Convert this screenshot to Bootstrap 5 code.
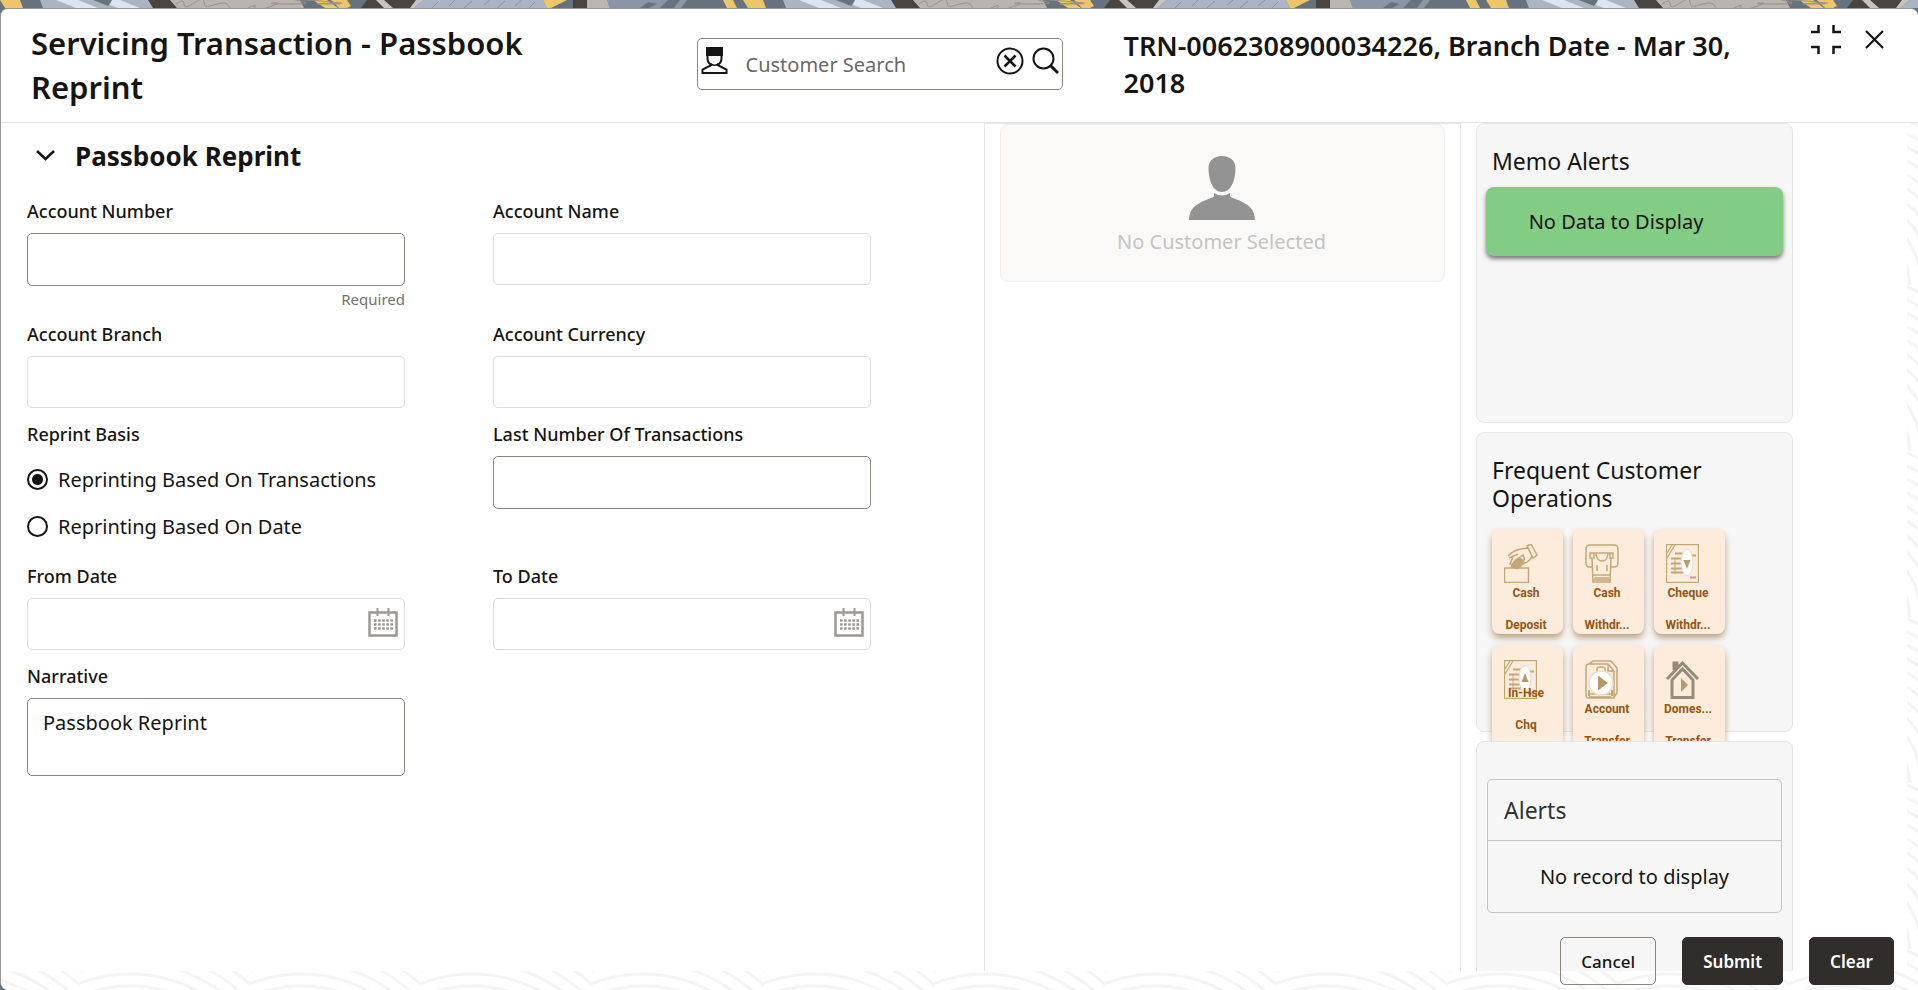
<!DOCTYPE html>
<html lang="en">
<head>
<meta charset="utf-8">
<meta name="viewport" content="width=device-width, initial-scale=1">
<title>Servicing Transaction - Passbook Reprint</title>
<link rel="stylesheet" href="https://cdn.jsdelivr.net/npm/bootstrap@5.3.0/dist/css/bootstrap.min.css">
<style>
body{font-family:"Noto Sans","Open Sans",sans-serif;font-size:20px;line-height:28px;color:#161513;background:#66727d}
.shell{height:100vh;overflow:hidden}
.banner{height:8px;width:100%;flex:none}
.banner-wrap{background:#66727d;margin-bottom:-12px;padding-bottom:12px}
.dialog{border:1px solid #98999a;border-bottom:0;border-right:0;border-radius:8px 8px 0 8px;overflow:hidden;min-height:0;
background:#fff repeating-radial-gradient(circle at 30% 100%,#fff 0 7px,#f4f4f4 8px 10px,#fff 11px 12px) 78px 110px/171px 166px}
.head{height:114px;border-bottom:1px solid #e5e5e5;background:#fff;padding:12px 30px 0 30px}
.head h1{font-size:31px;line-height:44px;font-weight:600;width:calc(36% - 3px);padding-right:150px;margin:0}
.head h2{font-size:27px;line-height:37px;font-weight:600;margin:6px 0 0 61px;width:34%}
.search{width:366px;height:52px;border:1px solid #8b8580;border-radius:5px;margin-top:17px;padding:0 3px}
.search input{background:none;border:0;outline:0;font-size:20px;padding:0;margin-left:18px;min-width:0;width:0;margin-top:2px}
.search input::placeholder{color:#6b6864;opacity:1}
.bare{background:none;border:0;padding:0;color:inherit;line-height:0}
.search .bare,.search>svg{margin-bottom:6px;flex:none}
.main-grid{display:grid;grid-template-columns:983fr 477fr 446fr;background:#fff;margin:0 11px 19px 0;min-height:0;overflow:hidden}
.form-col{padding:15px 113px 0 26px}
.form-col h3{font-size:26px;line-height:36px;font-weight:700;margin:0}
.fields{display:grid;grid-template-columns:1fr 1fr;column-gap:88px;row-gap:14px;margin-top:25px}
.cap{display:block;font-size:18px;line-height:24px;font-weight:500;margin:0 0 10px;float:none;width:auto}
.box{width:100%;height:53px;border:1px solid #8b8580;border-radius:5px;background:#fff;padding:10px 15px;font-size:20px;color:#161513;display:block;box-shadow:none;resize:none}
textarea.box{height:78px}
.box:disabled{height:52px;border-color:#dfdedd;background:#fff}
.note{height:22px;font-size:15px;line-height:27px;color:#74716e;text-align:right}
.date{position:relative}
.date button{position:absolute;right:7px;top:10px;color:#9b9996}
.pick{height:47px;gap:10px}
.pick input{width:21px;height:21px;margin:0;appearance:none;border:2px solid #161513;border-radius:50%;background:#fff}
.pick input:checked{background:radial-gradient(circle,#161513 0 5px,#fff 6px)}
.mid{border:1px solid #e5e5e5;border-bottom:0;padding:0 15px}
.cust{background:#faf9f8;border:1px solid #f0eeec;border-radius:8px;height:158px;padding:31px 2px 0 0;color:#c4c3c1}
.side{padding:0 114px 0 15px}
.panel{background:#f6f6f6;border:1px solid #e5e5e5;border-radius:8px;height:300px;margin-bottom:9px;flex:none}
.panel h4{font-size:23px;line-height:28px;font-weight:400;margin:0}
.panel .title{padding:23px 15px 0}
.memo{background:#83cc83;border-radius:8px;height:69px;margin:12px 9px 0;padding-right:37px;box-shadow:0 3px 4px rgba(0,0,0,.5)}
.ops{display:grid;grid-template-columns:repeat(3,71px);column-gap:10px;row-gap:11px;margin:17px 0 0 15px}
.op{height:105px;background:#fdecdc;border:0;border-radius:8px;box-shadow:0 4px 6px rgba(150,110,60,.6);font:bold 12px/32px Roboto,"Liberation Sans Narrow",sans-serif;color:#9a5411;padding:15px 3px 0 0;display:flex;flex-direction:column;overflow:visible}
.op svg{margin-left:12px;flex:none;color:#c3a678}
.op span{display:block;width:100%;text-align:center;height:32px}
.op span:first-of-type{margin-top:-6px}
.op.three span:first-of-type{margin-top:-22px}
.last{position:relative;z-index:1;height:auto;flex:1 0 231px;border-bottom:0;margin:0;border-radius:8px 8px 0 0}
.alerts{border:1px solid #c5c4c3;border-radius:5px;margin:37px 10px 0;height:134px}
.alerts h4{height:61px;line-height:60px;padding-left:16px;border-bottom:1px solid #c5c4c3;color:#333}
.alerts div{padding-top:22px}
.foot{position:absolute;right:24px;bottom:5px;gap:26px;z-index:2}
.foot button{height:48px;border-radius:5px;font-size:17px;font-weight:600;padding:1px 20px 0;border:1px solid #312d2a;background:#312d2a;color:#fff}
.foot .plain{background:none;border-color:#8b8580;color:#161513;font-weight:500}
</style>
<script src="https://cdn.jsdelivr.net/npm/bootstrap@5.3.0/dist/js/bootstrap.bundle.min.js"></script>
</head>
<body>
<svg width="0" height="0" class="position-absolute" aria-hidden="true">
<symbol id="cal" viewBox="0 0 30 30"><path d="M1.500 4.500h27v23h-27z" fill="none" stroke="currentColor" stroke-width="2.500"/><path d="M9.500 0v8M20.500 0v8" stroke="currentColor" stroke-width="2"/><path d="M6 12.500h19M6 16.500h19M6 20.500h19" fill="none" stroke="currentColor" stroke-width="2.500" stroke-dasharray="2.600 1.500"/></symbol>
<symbol id="cheque" viewBox="0 0 33 39"><path d="M.500.500h32v38H.500zM1 14l8-13M1 9l5-8" fill="none" stroke="currentColor" stroke-width="1.300"/><path d="M5 14.500h12M5 19.500h11M5 24.500h11M5 28.500h12M26 11.500h4M9 9.500h8M24 33.500h6" fill="none" stroke="currentColor" stroke-width="2"/><path d="M9 14v16" stroke="currentColor"/><ellipse cx="21" cy="18.500" rx="6" ry="13" fill="#fff" stroke="#e9dccb"/></symbol>
</svg>
<div class="shell d-flex flex-column">
<div class="banner-wrap">
<svg class="banner d-block" aria-hidden="true"><defs><pattern id="mosaic" width="743" height="8" patternUnits="userSpaceOnUse">
<path fill="#66727d" d="M0 0h743v8H0z"/>
<path fill="#ecc668" d="M0 0h20l3 8H5zM313 0h14l11 8h-13zM331 0h16l4 6-4 2h-8zM723 0h10l4 8h-10z"/>
<path fill="#abb4c3" d="M40 0h110l4 8H43z"/>
<path fill="#dbe4f1" d="M56 0h22l20 8H76zM112 0h8l20 8h-22l-8-3z"/>
<path fill="#66727d" d="M93 0h19l-4 6z"/>
<path fill="#484440" d="M148 0h22l8 8h-25zM367 0h50l-4 8h-52zM573 0h14v8h-14z"/>
<path fill="#bab4ae" d="M170 0h130l4 8H177z"/>
<path fill="none" stroke="#989089" d="M176 4q8-6 8 0t10-1 10-1 6 4 12-3 8 6 16 0 8-1 12 0 8-5 16 1 10-3 20 0 8 3 14-1"/>
<path fill="#c5c4c3" d="M376 0h8l9 8h-9zM416 0h8l-10 8h-4z"/>
<path fill="#aab4c6" d="M424 0h119l4 8H414z"/>
<path fill="none" stroke="#8391a9" d="M432 8l6-6M449 6l6-6M464 8l8-7M484 5l6-5M497 8l8-7M515 6l7-6M529 8l6-6"/>
<path fill="#ecc668" d="M543 0h24l-16 8h-4z"/>
<path fill="#bcb6b1" d="M587 0h20l3 8h-23z"/>
<path fill="#8a95a7" d="M607 0h80l-6 8h-71z"/>
<path fill="#66727d" d="M640 8l8-6 9 2-8 4zM668 0h12l-6 8h-14z"/>
</pattern></defs><rect width="100%" height="8" fill="url(#mosaic)"/></svg>
</div>
<div class="dialog position-relative flex-fill d-flex flex-column">
<header class="head d-flex align-items-start flex-shrink-0">
<h1>Servicing Transaction - Passbook Reprint</h1>
<div class="search d-flex align-items-center flex-shrink-0">
<svg width="27" height="28" viewBox="0 0 27 28"><path d="M5 0h17v9H5z" fill="#161513"/><path d="M6.500 8v3c0 4 2 6 4 7L1.500 22.500V26h24v-3.500L16.500 18c2-1 4-3 4-7V8" fill="none" stroke="#161513" stroke-width="2"/><path d="M9.500 16.500q4 3.500 8 0" fill="none" stroke="#161513" stroke-width="1.500"/></svg>
<input class="flex-fill" type="text" placeholder="Customer Search" aria-label="Customer Search">
<button class="bare" aria-label="Clear search"><svg width="28" height="28" viewBox="0 0 28 28" fill="none" stroke="#161513" stroke-width="2"><circle cx="14" cy="14" r="12.500"/><path d="M8.500 8.500l11 11M19.500 8.500l-11 11" stroke-width="2.500"/></svg></button>
<button class="bare ms-2" aria-label="Search"><svg width="27" height="28" viewBox="0 0 27 28" fill="none" stroke="#161513" stroke-width="2"><circle cx="11.500" cy="11.500" r="10"/><path d="M18.500 18.500l7.500 7.500" stroke-width="3"/></svg></button>
</div>
<h2>TRN-0062308900034226, Branch Date - Mar 30, 2018</h2>
<div class="d-flex align-items-center ms-auto gap-4 pt-1 pe-1">
<button class="bare" aria-label="Collapse"><svg width="30" height="30" viewBox="0 0 30 30" fill="none" stroke="#161513" stroke-width="2.500"><path d="M0 7h7.500V0M30 7h-7.500V0M0 22h7.500v7M30 22h-7.500v7"/></svg></button>
<button class="bare" aria-label="Close"><svg width="19" height="20" viewBox="0 0 19 20" fill="none" stroke="#161513" stroke-width="2.200"><path d="M1 1l17 17M18 1L1 18"/></svg></button>
</div>
</header>
<main class="main-grid flex-fill">
<section class="form-col">
<h3 class="d-flex align-items-center"><button class="bare" aria-label="Collapse section"><svg width="36" height="12" viewBox="0 0 36 12" fill="none" stroke="#161513" stroke-width="2.500"><path d="M10 1l8.500 8L27 1"/></svg></button><span class="ps-2 ms-1">Passbook Reprint</span></h3>
<form class="fields">
<div><label class="cap" for="an">Account Number</label><input class="box" id="an"><div class="note">Required</div></div>
<div><label class="cap" for="nm">Account Name</label><input class="box" id="nm" disabled></div>
<div><label class="cap" for="br">Account Branch</label><input class="box" id="br" disabled></div>
<div><label class="cap" for="cu">Account Currency</label><input class="box" id="cu" disabled></div>
<fieldset><legend class="cap">Reprint Basis</legend>
<div class="pick d-flex align-items-center"><input type="radio" name="basis" id="r1" checked><label for="r1">Reprinting Based On Transactions</label></div>
<div class="pick d-flex align-items-center"><input type="radio" name="basis" id="r2"><label for="r2">Reprinting Based On Date</label></div></fieldset>
<div><label class="cap" for="ln">Last Number Of Transactions</label><input class="box" id="ln"></div>
<div><label class="cap" for="fd">From Date</label><div class="date"><input class="box" id="fd" disabled><button type="button" class="bare" aria-label="Pick from date"><svg width="30" height="30"><use href="#cal"/></svg></button></div></div>
<div><label class="cap" for="td">To Date</label><div class="date"><input class="box" id="td" disabled><button type="button" class="bare" aria-label="Pick to date"><svg width="30" height="30"><use href="#cal"/></svg></button></div></div>
<div><label class="cap" for="na">Narrative</label><textarea class="box" id="na">Passbook Reprint</textarea></div>
</form>
</section>
<section class="mid">
<div class="cust d-flex flex-column align-items-center">
<svg width="66" height="64" viewBox="0 0 66 64" fill="#939393"><path d="M33 0c8 0 14 5 13.500 13C46 25 42 36 33 36S20 25 19.500 13C19 5 25 0 33 0zM25 37q8 5 16 0v3c2 4 25 5 25 24H0C0 45 23 44 25 40z"/></svg>
<div class="pt-2">No Customer Selected</div>
</div>
</section>
<aside class="side d-flex flex-column">
<div class="panel"><h4 class="title">Memo Alerts</h4><div class="memo d-flex align-items-center justify-content-center">No Data to Display</div></div>
<div class="panel"><h4 class="title">Frequent Customer Operations</h4>
<div class="ops">
<button class="op"><svg width="34" height="39" viewBox="0 0 34 39" fill="none" stroke="currentColor"><path d="M.500 24h24v14.500H.500z" stroke-width="1.500"/><path d="M7 23q2-7 8-9l5 2q0 6-7 9z" fill="currentColor"/><path d="M4 12q6-6 13-7l7-1M5 14l9-4M9 13l-3 7q3 2 6-4l7-5q3 4-1 8l-5 3M18 20q8-2 10-8M23 2l4-2 6 11-4 3z" stroke-width="1.500"/></svg><span>Cash</span><span>Deposit</span></button>
<button class="op"><svg width="34" height="39" viewBox="0 0 34 39" fill="none" stroke="currentColor" stroke-width="1.500"><path d="M8 23H4q-3 0-3-4V5q0-4 4-4h24q4 0 4 4v14q0 4-4 4h-3M5 9h23v5h-2l-1 24H8L7 14H5zM9 9v6M25 9v6M11 10q1 7 6 7t6-7M8 31h17M9 34h15M8 36h17M12 21v6M22 21v6"/></svg><span>Cash</span><span>Withdr...</span></button>
<button class="op"><svg width="33" height="39" viewBox="0 0 33 39"><use href="#cheque"/><path d="M17.500 16h7l-3.500 9z" fill="#b5996c"/></svg><span>Cheque</span><span>Withdr...</span></button>
<button class="op three"><svg width="33" height="39" viewBox="0 0 33 39"><use href="#cheque"/><path d="M17.500 22h7L21 13z" fill="#b5996c"/></svg><span>In-Hse</span><span>Chq</span></button>
<button class="op"><svg width="34" height="39" viewBox="0 0 34 39" fill="none" stroke="currentColor" stroke-width="1.500"><path d="M4 4h19l6 7v27H4q-3 0-3-3V7q0-3 3-3zM4 4l4-3h18l6 7v25l-3 4M23 4v7h6M12 11V9q0-2 4-2t4 2v2M4 34h22M4 37h22"/><path d="M4 30v6M27 30v6M12 12h9" stroke-width="2"/><circle cx="16" cy="23" r="12" fill="#fff" stroke="#eadcca"/><path d="M13 15.500l10 7.500-10 7.500z" fill="#b5996c" stroke="none"/></svg><span>Account</span><span>Transfer</span></button>
<button class="op"><svg width="34" height="39" viewBox="0 0 34 39" fill="none" stroke="#978b7b" stroke-width="3"><path d="M1 19L16.500 3 32 19M6 20v17.500h21V20L16.500 9zM8 10V3h3v5"/><path d="M15 18l7 7-7 7z" fill="#b5996c" stroke="none"/></svg><span>Domes...</span><span>Transfer</span></button>
</div></div>
<div class="panel last"><div class="alerts"><h4>Alerts</h4><div class="text-center">No record to display</div></div></div>
</aside>
</main>
<footer class="foot d-flex"><button class="plain">Cancel</button><button>Submit</button><button>Clear</button></footer>
</div>
</div>
</body>
</html>
